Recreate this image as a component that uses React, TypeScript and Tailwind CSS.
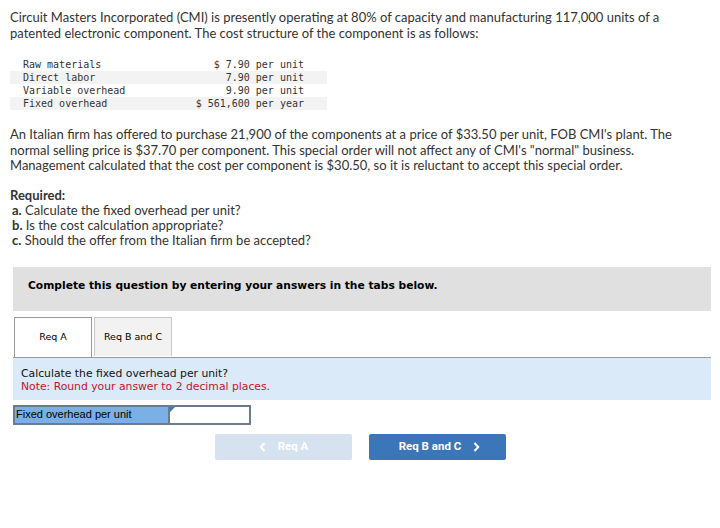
import React from "react";

const rows = [
  { label: "Raw materials", value: "$ 7.90 per unit", stripe: false },
  { label: "Direct labor", value: "7.90 per unit", stripe: true },
  { label: "Variable overhead", value: "9.90 per unit", stripe: false },
  { label: "Fixed overhead", value: "$ 561,600 per year", stripe: true },
];

export default function App() {
  return (
    <div className="w-[720px] h-[528px] bg-white text-[#333] overflow-hidden">
      <div className="pl-[10px] pr-[10px] pt-[9px]">
        <p className="text-[13px] leading-[16px] font-['Lato',sans-serif]">
          Circuit Masters Incorporated (CMI) is presently operating at 80% of capacity and manufacturing 117,000 units of a patented electronic component. The cost structure of the component is as follows:
        </p>
        <div className="mt-[17px] w-[317px] font-['DejaVu_Sans_Mono',monospace] text-[10px] leading-[13px] text-[#333]">
          {rows.map((r) => (
            <div key={r.label} className={`flex h-[13px] ${r.stripe ? "bg-[#f3f3f3]" : ""}`}>
              <span className="pl-[13px] w-[180px]">{r.label}</span>
              <span className="w-[114px] text-right">{r.value}</span>
            </div>
          ))}
        </div>
        <p className="mt-[17px] text-[13px] leading-[15.5px] font-['Lato',sans-serif]">
          An Italian firm has offered to purchase 21,900 of the components at a price of $33.50 per unit, FOB CMI's plant. The normal selling price is $37.70 per component. This special order will not affect any of CMI's "normal" business. Management calculated that the cost per component is $30.50, so it is reluctant to accept this special order.
        </p>
        <div className="mt-[14px] text-[13px] leading-[15.3px] font-['Lato',sans-serif]">
          <div className="font-bold">Required:</div>
          <div className="pl-[2px]"><span className="font-bold">a.</span> Calculate the fixed overhead per unit?</div>
          <div className="pl-[2px]"><span className="font-bold">b.</span> Is the cost calculation appropriate?</div>
          <div className="pl-[2px]"><span className="font-bold">c.</span> Should the offer from the Italian firm be accepted?</div>
        </div>
      </div>

      <div className="ml-[13px] mr-[9px] mt-[18px]">
        <div className="h-[44px] bg-[#e0e0e0] pt-[12px] pl-[15px] leading-[13px] font-['DejaVu_Sans',sans-serif] font-bold text-[10.7px] text-black">
          Complete this question by entering your answers in the tabs below.
        </div>
        <div className="mt-[6px] flex gap-[2px] pl-[1px] font-['DejaVu_Sans',sans-serif] text-[9.5px] text-black">
          <div className="w-[78px] h-[40px] border border-b-0 border-[#999] bg-white flex items-center justify-center">Req A</div>
          <div className="w-[78px] h-[39px] border border-b-0 border-[#c8c8c8] bg-[#f2f2f2] flex items-center justify-center">Req B and C</div>
        </div>
        <div className="border-t-[1px] border-[#999] bg-[#dbeaf8] h-[43px] pl-[8px] pt-[9px] font-['DejaVu_Sans',sans-serif] text-[10.8px] leading-[13px]">
          <div className="text-[#111]">Calculate the fixed overhead per unit?</div>
          <div className="text-[#c4122f]">Note: Round your answer to 2 decimal places.</div>
        </div>
        <div className="mt-[5px] flex h-[20px]">
          <div className="w-[155px] border-2 border-r-0 border-[#6b7a8c] bg-[#7ab0e6] flex items-center pl-[1px] font-['Liberation_Sans',sans-serif] text-[11px] text-black">
            Fixed overhead per unit
          </div>
          <div className="relative w-[83px] border-2 border-[#6b7a8c] bg-white">
            <div className="absolute left-0 top-0 w-0 h-0 border-t-[5px] border-r-[5px] border-t-[#3b77b8] border-r-transparent"></div>
          </div>
        </div>
        <div className="mt-[9px] flex gap-[17px] pl-[202px] font-['Roboto',sans-serif] font-bold text-[11.5px] text-white">
          <div className="w-[137px] h-[26px] rounded-[2px] bg-[#d6e2f0] flex items-center justify-center gap-[12px]">
            <svg width="7" height="10" viewBox="0 0 7 10"><path d="M5.5 1 L1.8 5 L5.5 9" stroke="white" strokeWidth="2" fill="none" /></svg>
            <span>Req A</span>
          </div>
          <div className="w-[137px] h-[26px] rounded-[2px] bg-[#3b77b8] flex items-center justify-center gap-[12px] pl-[4px]">
            <span>Req B and C</span>
            <svg width="7" height="10" viewBox="0 0 7 10"><path d="M1.5 1 L5.2 5 L1.5 9" stroke="white" strokeWidth="2" fill="none" /></svg>
          </div>
        </div>
      </div>
    </div>
  );
}
